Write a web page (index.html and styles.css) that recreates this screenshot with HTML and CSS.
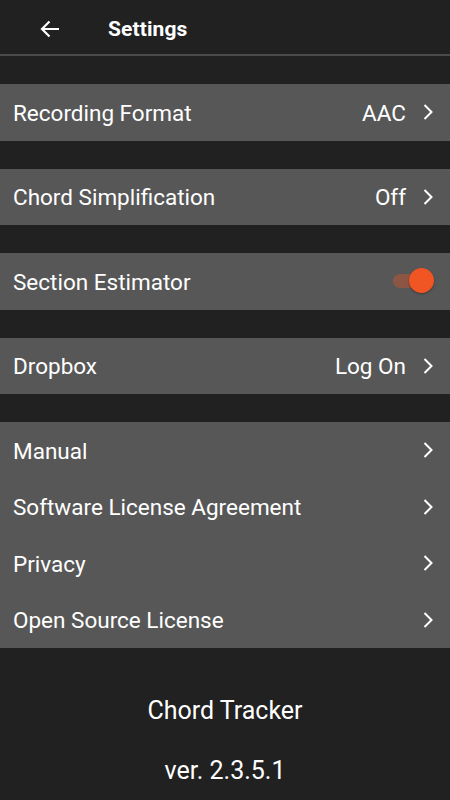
FILE: index.html
```html
<!DOCTYPE html>
<html>
<head>
<meta charset="utf-8">
<link rel="stylesheet" href="styles.css">
</head>
<body>
<div class="app">
  <header class="topbar">
    <span class="back">
      <svg width="20" height="18" viewBox="0 0 20 18"><path d="M19 9H2.5M9.5 1.5L2 9l7.5 7.5" fill="none" stroke="#fff" stroke-width="2.2"/></svg>
    </span>
    <span class="title">Settings</span>
  </header>
  <div class="divider"></div>
  <main class="list">
    <section class="group">
      <div class="row"><span class="label">Recording Format</span><span class="value">AAC</span><span class="chev"><svg width="12" height="18" viewBox="0 0 12 18"><path d="M2.5 2l7 7-7 7" fill="none" stroke="#fff" stroke-width="2"/></svg></span></div>
    </section>
    <section class="group">
      <div class="row"><span class="label">Chord Simplification</span><span class="value">Off</span><span class="chev"><svg width="12" height="18" viewBox="0 0 12 18"><path d="M2.5 2l7 7-7 7" fill="none" stroke="#fff" stroke-width="2"/></svg></span></div>
    </section>
    <section class="group">
      <div class="row"><span class="label">Section Estimator</span><span class="toggle"><span class="track"></span><span class="thumb"></span></span></div>
    </section>
    <section class="group">
      <div class="row"><span class="label">Dropbox</span><span class="value">Log On</span><span class="chev"><svg width="12" height="18" viewBox="0 0 12 18"><path d="M2.5 2l7 7-7 7" fill="none" stroke="#fff" stroke-width="2"/></svg></span></div>
    </section>
    <section class="group">
      <div class="row"><span class="label">Manual</span><span class="chev"><svg width="12" height="18" viewBox="0 0 12 18"><path d="M2.5 2l7 7-7 7" fill="none" stroke="#fff" stroke-width="2"/></svg></span></div>
      <div class="row"><span class="label">Software License Agreement</span><span class="chev"><svg width="12" height="18" viewBox="0 0 12 18"><path d="M2.5 2l7 7-7 7" fill="none" stroke="#fff" stroke-width="2"/></svg></span></div>
      <div class="row"><span class="label">Privacy</span><span class="chev"><svg width="12" height="18" viewBox="0 0 12 18"><path d="M2.5 2l7 7-7 7" fill="none" stroke="#fff" stroke-width="2"/></svg></span></div>
      <div class="row"><span class="label">Open Source License</span><span class="chev"><svg width="12" height="18" viewBox="0 0 12 18"><path d="M2.5 2l7 7-7 7" fill="none" stroke="#fff" stroke-width="2"/></svg></span></div>
    </section>
  </main>
  <footer class="about">
    <div class="appname">Chord Tracker</div>
    <div class="version">ver. 2.3.5.1</div>
  </footer>
</div>
</body>
</html>
```
FILE: styles.css
```css
html, body {
  margin: 0;
  padding: 0;
  background: #212121;
}
body {
  font-family: Roboto, "Noto Sans", sans-serif;
  color: #fff;
}
.app {
  width: 450px;
  height: 800px;
  overflow: hidden;
  background: #212121;
}
.topbar {
  height: 54px;
  display: flex;
  align-items: center;
  padding-left: 40px;
  padding-top: 4px;
  box-sizing: border-box;
}
.back {
  display: flex;
  width: 20px;
  height: 18px;
}
.title {
  margin-left: 48px;
  font-size: 21px;
  font-weight: 700;
  letter-spacing: 0.1px;
}
.divider {
  height: 2px;
  background: #4a4a4a;
}
.list {
  display: flex;
  flex-direction: column;
  gap: 28px;
  padding-top: 28px;
}
.group {
  background: #575757;
}
.row {
  height: 56.5px;
  display: flex;
  align-items: center;
  padding: 0 16px 0 13px;
  font-size: 22.5px;
}
.label {
  flex: 1;
  padding-top: 1px;
}
.value {
  margin-right: 16px;
  padding-top: 1px;
}
.chev {
  display: flex;
  width: 12px;
  height: 18px;
}
.toggle {
  position: relative;
  width: 41px;
  height: 26px;
}
.track {
  position: absolute;
  left: 0;
  top: 6px;
  width: 38px;
  height: 14px;
  border-radius: 7px;
  background: rgba(240, 85, 35, 0.35);
}
.thumb {
  position: absolute;
  right: 0;
  top: 0;
  width: 25px;
  height: 25px;
  border-radius: 50%;
  background: #f05523;
  box-shadow: 0 1px 2px rgba(0,0,0,0.35);
}
.about {
  display: flex;
  flex-direction: column;
  align-items: center;
  padding-top: 48px;
  gap: 30px;
  font-size: 25px;
}
.appname, .version {
  line-height: 30px;
}
```
